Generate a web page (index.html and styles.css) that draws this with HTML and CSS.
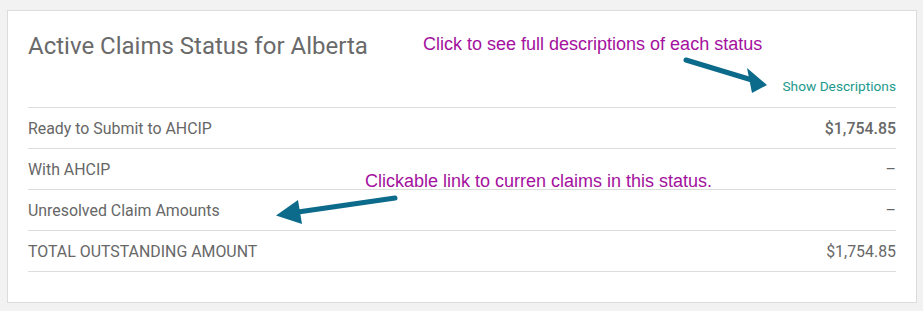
FILE: index.html
```html
<!DOCTYPE html>
<html lang="en">
<head>
<meta charset="utf-8">
<title>Active Claims Status for Alberta</title>
<link rel="stylesheet" href="styles.css">
</head>
<body>
<section class="card">
  <header class="card-head">
    <h2 class="title">Active Claims Status for Alberta</h2>
    <div class="link-row"><a class="show-link" href="#">Show Descriptions</a></div>
  </header>
  <div class="status-table">
    <div class="row"><span class="label">Ready to Submit to AHCIP</span><span class="amount strong">$1,754.85</span></div>
    <div class="row"><span class="label">With AHCIP</span><span class="amount">–</span></div>
    <div class="row"><span class="label">Unresolved Claim Amounts</span><span class="amount">–</span></div>
    <div class="row"><span class="label">TOTAL OUTSTANDING AMOUNT</span><span class="amount">$1,754.85</span></div>
  </div>

  <p class="note note-top">Click to see full descriptions of each status</p>
  <p class="note note-mid">Clickable link to curren claims in this status.</p>
  <svg class="arrows" viewBox="8 11 908 291" width="908" height="291" aria-hidden="true">
    <line x1="686" y1="60" x2="752" y2="80" stroke="#0c6b8b" stroke-width="5" stroke-linecap="round"/>
    <polygon points="767,85 747,68 752,93" fill="#0c6b8b"/>
    <line x1="395" y1="198" x2="298" y2="212" stroke="#0c6b8b" stroke-width="5" stroke-linecap="round"/>
    <polygon points="276,215.5 298,200 302,224" fill="#0c6b8b"/>
  </svg>
</section>
</body>
</html>
```

FILE: styles.css
```css
html, body {
  margin: 0;
  padding: 0;
}

body {
  background: #f2f2f2;
  padding: 10px 6px 8px 7px;
  font-family: Roboto, "Liberation Sans", sans-serif;
  color: #676767;
}

.card {
  position: relative;
  background: #ffffff;
  border: 1px solid #dcdcdc;
  padding: 0 20px 30px;
}

.card-head {
  padding: 21px 0 13px;
}

.title {
  margin: 0;
  font-size: 24px;
  line-height: 28px;
  font-weight: 400;
  color: #6a6a6a;
}

.link-row {
  margin-top: 18px;
  display: flex;
  justify-content: flex-end;
}

.show-link {
  font-size: 13.7px;
  line-height: 16px;
  color: #1c998c;
  text-decoration: none;
}

.status-table {
  border-top: 1px solid #dddddd;
}

.row {
  display: flex;
  justify-content: space-between;
  align-items: center;
  height: 40px;
  border-bottom: 1px solid #dddddd;
  font-size: 15.9px;
  color: #676767;
}

.amount.strong {
  font-weight: 500;
}

.note {
  position: absolute;
  margin: 0;
  font-family: "Liberation Sans", Arial, sans-serif;
  font-size: 18px;
  line-height: 20px;
  color: #a3119e;
  white-space: nowrap;
}

.note-top {
  left: 415px;
  top: 23px;
}

.note-mid {
  left: 357px;
  top: 160px;
}

.arrows {
  position: absolute;
  left: 0;
  top: 0;
  pointer-events: none;
}
```
